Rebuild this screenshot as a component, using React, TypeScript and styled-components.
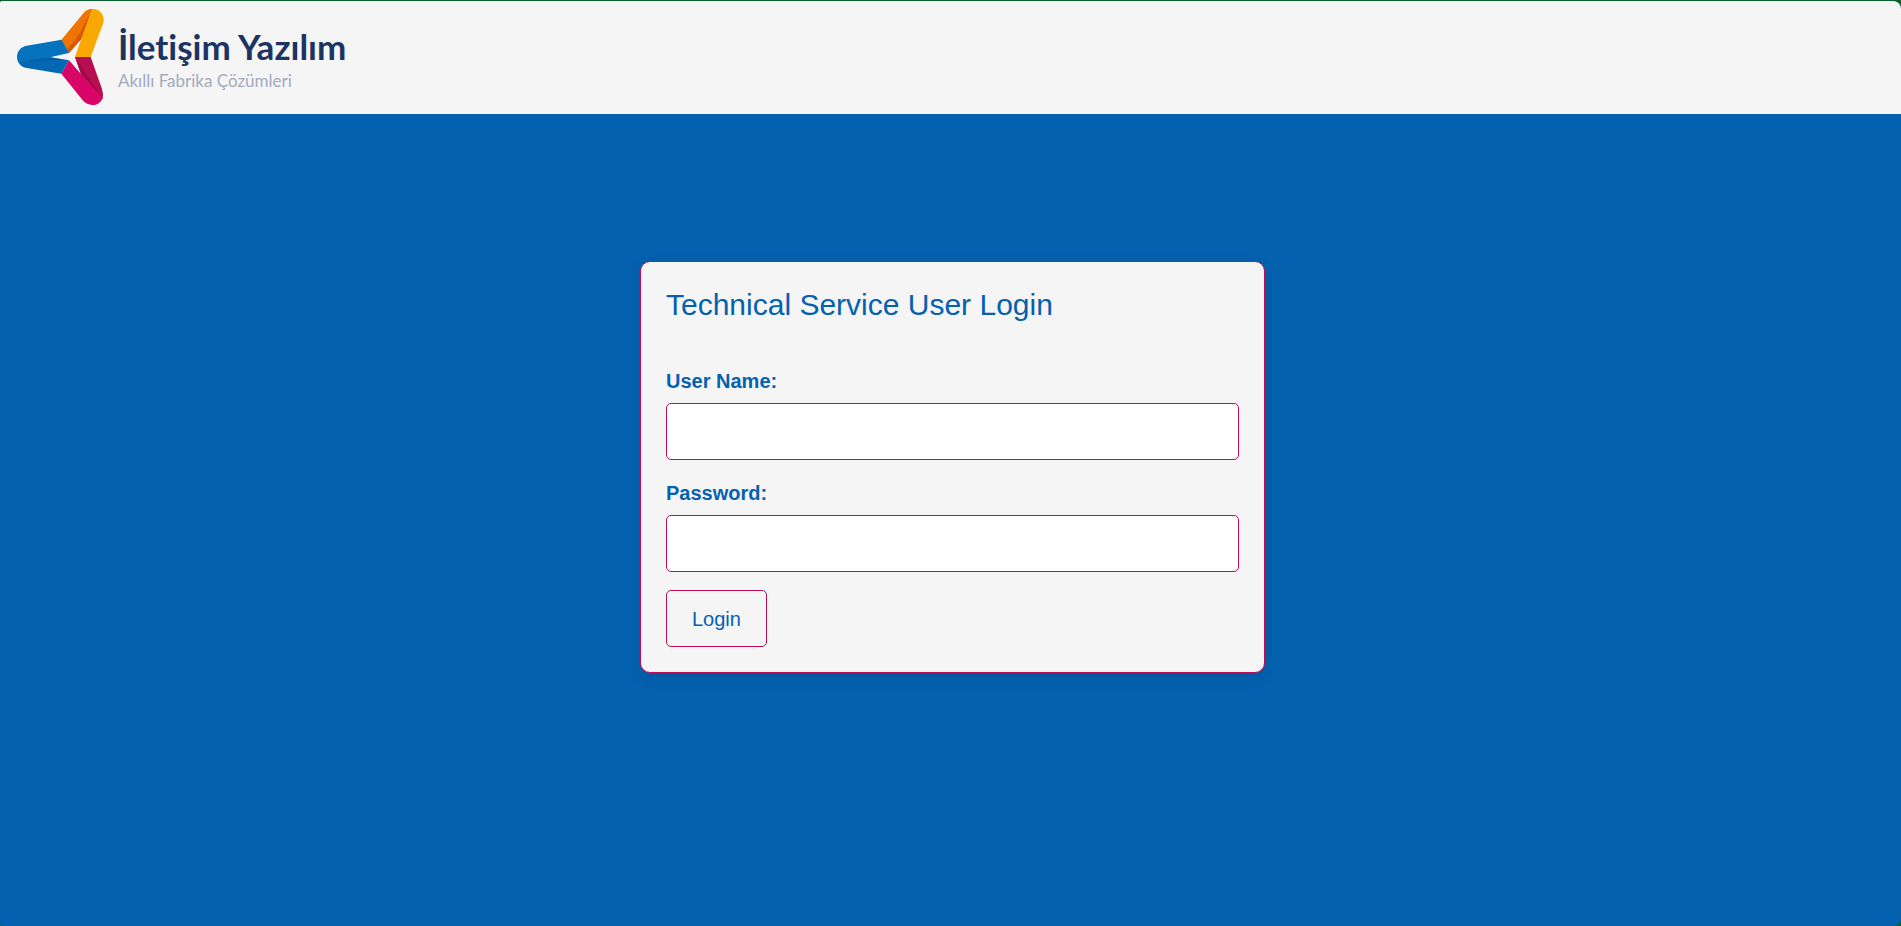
import React from 'react';
import styled, { createGlobalStyle } from 'styled-components';

const blue = '#0461af';
const crimson = '#c00d58';
const paper = '#f5f5f5';

const GlobalStyle = createGlobalStyle`
  *, *::before, *::after { box-sizing: border-box; }
  body {
    margin: 0;
    background: #0b602f;
    font-family: Arial, "Liberation Sans", sans-serif;
    font-size: 20px;
    line-height: 30px;
    color: ${blue};
  }
`;

const Page = styled.div`
  min-height: calc(100vh - 1px);
  margin-top: 1px;
  display: flex;
  flex-direction: column;
  overflow: hidden;
  border-radius: 2px 8px 8px 2px;
  background: ${blue};
`;

const Header = styled.header`
  padding: 8px 16px;
  background: ${paper};
`;

const Brand = styled.a`
  display: flex;
  gap: 14px;
  width: max-content;
  text-decoration: none;
`;

const Mark = styled.svg`
  display: block;
  width: 88px;
  height: 97px;
`;

const BrandText = styled.span`
  display: flex;
  flex-direction: column;
  gap: 7px;
  padding-top: 17px;
  font-family: Lato, "Noto Sans", sans-serif;
  font-variant-ligatures: none;
`;

const BrandName = styled.span`
  font-size: 35px;
  font-weight: 700;
  line-height: 40px;
  color: #1c3462;
`;

const Tagline = styled.span`
  font-size: 17px;
  line-height: 16px;
  color: #a3abbd;
`;

const Main = styled.main`
  flex: 1;
  padding: 147px 16px 48px 20px;
`;

const Card = styled.form`
  width: 100%;
  max-width: 625px;
  margin: 0 auto;
  padding: 25px;
  border: 1px solid ${crimson};
  border-radius: 10px;
  background: ${paper};
  box-shadow: 0 5px 14px rgba(0, 0, 0, 0.1);
`;

const Title = styled.h1`
  margin: 0 0 43px;
  font-size: 30px;
  font-weight: 400;
  line-height: 36px;
`;

const Field = styled.div`
  margin-bottom: 18px;
`;

const Label = styled.label`
  display: block;
  margin-bottom: 7px;
  font-weight: 700;
`;

const TextInput = styled.input`
  display: block;
  width: 100%;
  height: 57px;
  padding: 0 16px;
  border: 1px solid ${crimson};
  border-radius: 5px;
  background: #fff;
  color: ${blue};
  font: inherit;
`;

const LoginButton = styled.button`
  display: block;
  height: 57px;
  padding: 0 25px;
  border: 1px solid ${crimson};
  border-radius: 5px;
  background: transparent;
  color: ${blue};
  font: inherit;
  cursor: pointer;
`;

const Logo = () => (
  <Mark viewBox="48 27 264 291" aria-hidden="true">
    <path d="M185 119 L252 38 Q262 27 277 27 L280 60 L243 118 L207 159 Z" fill="#ee7404" />
    <path d="M277 27 L236 92 L201 150 L207 159 L243 118 Z" fill="#d9570b" />
    <path d="M185 119 L252 38 Q262 27 277 27 Q258 58 246 88 Q236 110 201 148 Z" fill="#ee7404" />
    <path d="M225 171 L268 48 Q274 27 280 27 C302 28 316 48 309 71 L272 171 Z" fill="#f8a800" />
    <path d="M225 171 H272 L306 267 Q311 282 308 297 L243 222 Z" fill="#b70d51" />
    <path d="M225 171 L308 297 L243 222 Z" fill="#9f0b47" />
    <path d="M184 221 L207 181 L243 222 L308 293 C303 308 292 315 277 315 Q260 314 250 303 Z" fill="#d90467" />
    <path d="M51 168 C51 188 62 201 80 204 L184 221 L207 181 L150 172 Z" fill="#0367b1" />
    <path d="M60 186 L150 172 L195 179 Q120 180 60 186 Z" fill="#045ba3" />
    <path d="M185 119 L80 137 C62 140 51 154 51 170 Q52 180 59 187 Q100 179 150 172 L207 159 Z" fill="#0472bd" />
  </Mark>
);

export default function App() {
  return (
    <>
      <GlobalStyle />
      <Page>
        <Header>
          <Brand href="#">
            <Logo />
            <BrandText>
              <BrandName>İletişim Yazılım</BrandName>
              <Tagline>Akıllı Fabrika Çözümleri</Tagline>
            </BrandText>
          </Brand>
        </Header>
        <Main>
          <Card onSubmit={(event) => event.preventDefault()}>
            <Title>Technical Service User Login</Title>
            <Field>
              <Label htmlFor="username">User Name:</Label>
              <TextInput id="username" name="username" type="text" autoComplete="username" />
            </Field>
            <Field>
              <Label htmlFor="password">Password:</Label>
              <TextInput id="password" name="password" type="password" autoComplete="current-password" />
            </Field>
            <LoginButton type="submit">Login</LoginButton>
          </Card>
        </Main>
      </Page>
    </>
  );
}
